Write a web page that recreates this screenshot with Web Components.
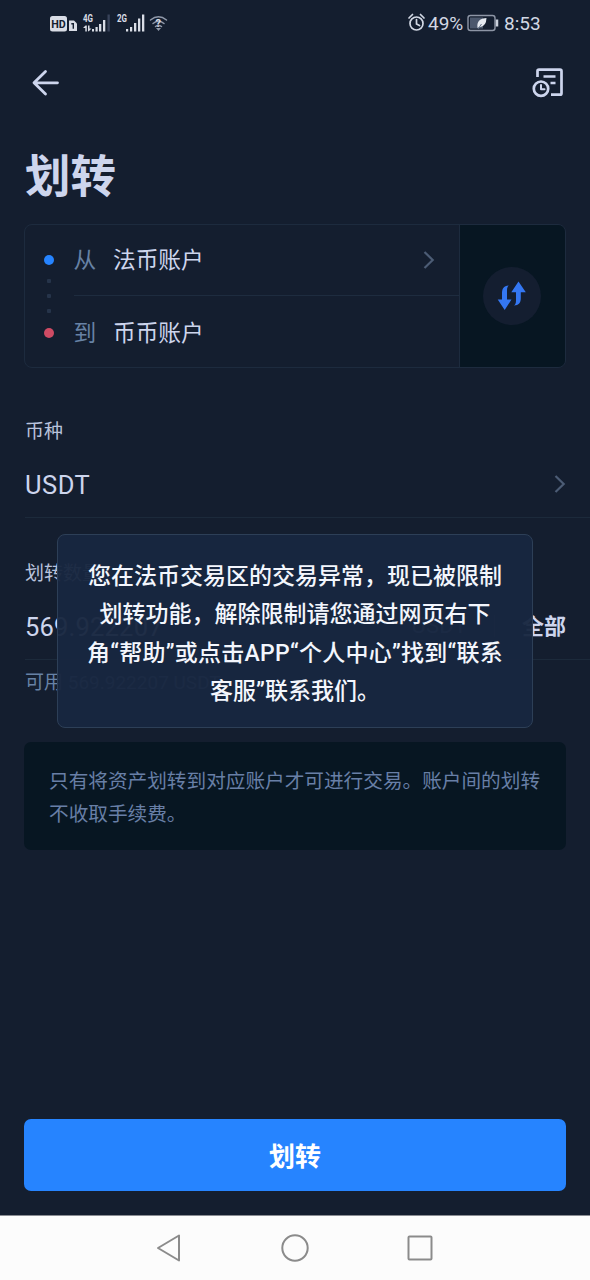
<!DOCTYPE html>
<html lang="zh-CN">
<head>
<meta charset="utf-8">
<title>划转</title>
<style>
html,body{margin:0;padding:0}
body{background:#141e2f;width:590px;height:1280px;overflow:hidden;font-family:Roboto,"Noto Sans CJK SC",sans-serif;color:#cdd5ed}
</style>
</head>
<body>
<transfer-page></transfer-page>
<script>
const define=(name,html)=>customElements.define(name,class extends HTMLElement{
  constructor(){super();this.attachShadow({mode:'open'}).innerHTML=html;}
});

define('status-bar',`<style>
:host{display:flex;height:46px;box-sizing:border-box;padding:0 50px 0 50px;justify-content:space-between;align-items:center;color:#d2d8e4;font:19px Roboto,sans-serif}
svg{display:block}.r{display:flex;align-items:center}.r span{line-height:24px;padding-top:2px}
</style>
<svg width="120" height="22" viewBox="50 12 120 22" fill="#d9dde6">
<rect x="50" y="16" width="17" height="15.5" rx="2.5"/>
<text x="51.3" y="28" font-size="11.5" font-weight="700" fill="#141e2f" textLength="14.5" lengthAdjust="spacingAndGlyphs">HD</text>
<path d="M69 20.500h5l3 3v7.500h-8z"/><path d="M71.300 23.800h2v5" fill="none" stroke="#141e2f" stroke-width="1.400"/>
<text x="83" y="22" font-size="11" font-weight="700" textLength="10" lengthAdjust="spacingAndGlyphs">4G</text>
<path d="M83 28l2.500-2.500h1.300v6h-1.500v-3.500zM88 25.500h1.500v3h2l-3 3-.5-.5zM92 29h2v2.500h-2zM95.500 27h2.200v4.500h-2.200zM99 24h2.300v7.500H99zM103 20h2.300v11.500H103z"/>
<path d="M107.500 14.500h2.300v17h-2.300z" fill="#38435a"/>
<text x="117" y="22" font-size="11" font-weight="700" textLength="10" lengthAdjust="spacingAndGlyphs">2G</text>
<path d="M126 29h2.200v2.500H126zM130 27h2.200v4.500H130zM134 23h2.300v8.500H134zM138 18.500h2.300v13H138zM142 14.500h2.300v17H142z"/>
<g fill="none" stroke="#9099aa" stroke-width="1.500" stroke-linecap="round"><path d="M150.500 20q8-6.500 16 0M153 23.500q5.500-4.300 11 0M155.500 26.500q3-2 6 0"/></g>
<path d="M156 28l2.500 3 2.500-3z" fill="#9099aa"/><text x="155.500" y="27" font-size="11" font-weight="700">?</text>
</svg>
<div class="r">
<svg width="20" height="22" viewBox="407 12 20 22" fill="none" stroke="#d2d8e4" stroke-width="1.700" stroke-linecap="round"><circle cx="416.500" cy="23.500" r="6.500"/><path d="M409 18l3.500-3.500M424 18l-3.500-3.500M416.500 19.500v4.500l3 1.500"/></svg>
<span style="width:39px;margin-left:1px">49%</span>
<svg width="33" height="20" viewBox="467 13 33 20"><rect x="468" y="15.500" width="27" height="15" rx="2.500" fill="none" stroke="#8d95a5" stroke-width="1.400"/><path d="M470 17.500h13v11h-13z" fill="#4c586d"/><path d="M477.500 28q-1-6 3-8.500 2-1.200 6-1.500-.3 8-6 9l-1.500.2z" fill="#e4e8ef"/><path d="M478 29l3.500-5" stroke="#627087"/><path d="M497 19.500v7" stroke="#cbd1dc" stroke-width="2.500"/></svg>
<span style="margin-left:4px;width:36px">8:53</span></div>`);

define('nav-header',`<style>:host{display:flex;height:74px;box-sizing:border-box;padding:0 25px 0 32px;justify-content:space-between;align-items:center}svg{display:block;fill:none;stroke:#cdd5ed;stroke-linecap:round;stroke-linejoin:round}</style>
<svg width="28" height="28" viewBox="32 69 28 28" stroke-width="2.800"><path d="M57.500 82.800H34.500M45.500 71.500L34 82.800l11.500 11.300"/></svg>
<svg width="34" height="34" viewBox="531 66 34 34" stroke-width="2.700"><path d="M537.500 77v-5.800q0-1.500 1.500-1.500h21q1.500 0 1.500 1.500v22q0 1.500-1.500 1.500h-9M543.500 76.500h12M550.500 83h5" stroke-linecap="butt"/><circle cx="541" cy="88.700" r="7.200"/><path d="M541 85v4.200h3.500" stroke-width="2"/></svg>`);

define('account-row',`<style>:host{display:flex;height:72px;box-sizing:border-box;align-items:center;font-size:22.700px;line-height:34px;color:#cdd5ed}
i{width:10px;height:10px;border-radius:50%;background:var(--dot);margin-left:18.500px;margin-right:20px;flex:none}
.k{width:39.500px;color:#6782a5}.v{flex:1}.k,.v{padding-top:2px}</style>
<i></i><div class="k"><slot name="k"></slot></div><div class="v"><slot></slot></div><slot name="end"></slot>`);

define('chevron-icon',`<style>:host{display:block}svg{display:block}</style><svg width="12" height="20" viewBox="0 0 12 20" fill="none" stroke="#4c5c75" stroke-width="2.200"><path d="M1.500 2l8.200 8-8.200 8"/></svg>`);

define('account-card',`<style>:host{display:flex;position:relative;height:144px;box-sizing:border-box;margin:0 24px;border:1.500px solid #1d2b3e;border-radius:8px;overflow:hidden}
.rows{flex:1;display:flex;flex-direction:column}
account-row{flex:none;height:70px}account-row:last-of-type{height:74px}
hr{border:0;height:1px;background:#1e2c3f;margin:0 0 0 49px;width:calc(100% - 49px);flex:none}
.swap{width:105px;border-left:1px solid #1d2b3e;background:#071622;display:grid;place-items:center}
.c{width:58px;height:58px;border-radius:50%;background:#141e30;display:grid;place-items:center;margin-right:1px}
.dots{position:absolute;left:22px;top:54px;display:grid;gap:11px}.dots b{width:4px;height:4px;background:#26344a;border-radius:1px}
chevron-icon{margin-right:24px}</style>
<div class="rows"><account-row style="--dot:#2684ff"><span slot="k">从</span>法币账户<chevron-icon slot="end"></chevron-icon></account-row><hr><account-row style="--dot:#cf4b64"><span slot="k">到</span>币币账户</account-row></div>
<div class="dots"><b></b><b></b><b></b></div>
<div class="swap"><div class="c"><svg width="30" height="30" viewBox="497.500 281.500 30 30" fill="#3477f2"><path d="M509.300 286c-5.500.5-6.800 3.500-6.800 8v6h-4.300l7 10.500 6.800-10.500h-4.500v-9c0-2.500.5-4 1.800-5z"/><path d="M519 282l-7.200 10.800h4.700v8c0 3-.5 4.200-2 5.200 4.800-.2 6.800-2.500 6.800-7.500v-5.700h5z"/></svg></div></div>`);

define('form-field',`<style>:host{display:block;height:142px;box-sizing:border-box;padding-left:25px}
.l{font-size:19px;line-height:32px;height:34px;color:#b9c3dc}
.v{display:flex;align-items:center;height:67px;padding-right:24px;font-size:25.500px;letter-spacing:.2px;color:#cdd5ed;border-bottom:1.500px solid #1c2a3b}
.t{flex:1;padding-top:3px}</style>
<div class="l"><slot name="label"></slot></div><div class="v"><div class="t"><slot></slot></div><slot name="end"></slot></div>`);

define('info-note',`<style>:host{display:block;box-sizing:border-box;height:108px;margin:0 24px;padding:22.500px 25px 0;border-radius:7px;background:#071622;color:#687fa6;font-size:19.650px;line-height:33px;white-space:nowrap}</style><slot></slot>`);

define('primary-button',`<style>:host{display:block;margin:0 24px}button{display:block;width:100%;height:72px;border:0;border-radius:7px;background:#2684ff;color:#fff;font:700 26px/72px "Noto Sans CJK SC",sans-serif;padding:0}</style><button><slot></slot></button>`);

define('system-nav',`<style>:host{display:flex;height:65px;box-sizing:border-box;background:#fcfcfc;border-top:1px solid #8a8d93;padding:0 155px;justify-content:space-between;align-items:center}svg{display:block;fill:none;stroke:#8b8b8b;stroke-width:2;stroke-linejoin:round}</style>
<svg width="28" height="30"><path d="M24 2.500v25L3 15z"/></svg><svg width="30" height="30"><circle cx="16" cy="15" r="12.700"/></svg><svg width="30" height="30"><rect x="3.500" y="3.500" width="23" height="23" rx="1"/></svg>`);

define('toast-message',`<style>:host{position:absolute;left:57px;top:534px;width:476px;height:194px;box-sizing:border-box;border:1.500px solid #2d3f57;border-radius:8px;background:rgba(24,39,64,.96);padding-top:23px;color:#f3f6fd;font-size:23px;font-weight:500;line-height:38.300px;text-align:center;white-space:nowrap}</style><slot></slot>`);

define('transfer-page',`<style>
:host{display:flex;flex-direction:column;position:relative;width:590px;height:1280px}
h1{margin:0;height:104px;box-sizing:border-box;padding:23px 0 0 25px;font-size:45.500px;line-height:70px;font-weight:700;color:#cdd5ed}
.gap{height:48px}.avail{height:83px;padding-left:25px;font-size:19px;line-height:47px;color:#6782a5;box-sizing:border-box}
.end{display:flex;align-items:center}.unit{font-size:22px;color:#6782a5}.bar{width:1px;height:22px;background:#314159;margin:0 27px}.all{font-size:22px;font-weight:700;letter-spacing:0;line-height:30px;padding-top:2px}
.fill{flex:1}system-nav{margin-top:24px}
.wide{letter-spacing:.5px}.quoted{letter-spacing:.25px}
</style>
<status-bar></status-bar><nav-header></nav-header><h1>划转</h1><account-card></account-card><div class="gap"></div>
<form-field><span slot="label">币种</span><span class="wide">USDT</span><chevron-icon slot="end"></chevron-icon></form-field>
<form-field style="height:101px"><span slot="label">划转数量</span>569.922207<div class="end" slot="end"><span class="unit">USDT</span><span class="bar"></span><span class="all">全部</span></div></form-field>
<div class="avail">可用 569.922207 USDT</div>
<info-note>只有将资产划转到对应账户才可进行交易。账户间的划转<br>不收取手续费。</info-note>
<div class="fill"></div><primary-button>划转</primary-button><system-nav></system-nav>
<toast-message>您在法币交易区的交易异常，现已被限制<br>划转功能，解除限制请您通过网页右下<br><span class="quoted">角“帮助”或点击APP“个人中心”找到“联系</span><br>客服”联系我们。</toast-message>`);
</script>
</body>
</html>
